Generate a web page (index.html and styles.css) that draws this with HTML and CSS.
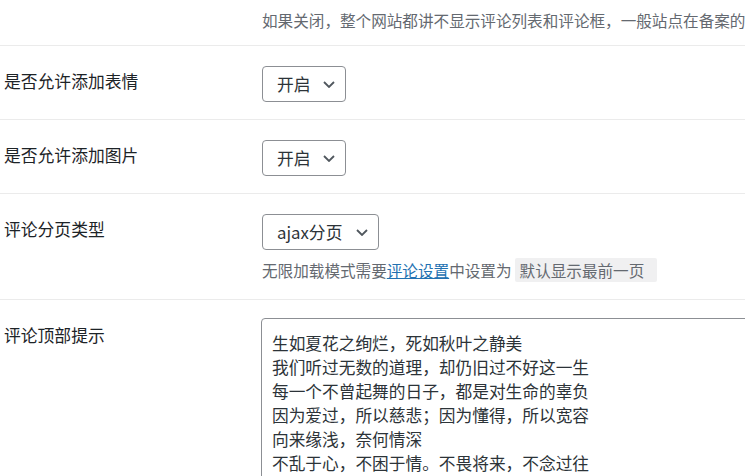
FILE: index.html
```html
<!DOCTYPE html>
<html lang="zh-CN">
<head>
<meta charset="utf-8">
<title>评论设置</title>
<link rel="stylesheet" href="styles.css">
</head>
<body>
<div class="page">
  <div class="row row-top">
    <div class="label"></div>
    <div class="field">
      <p class="desc nowrap">如果关闭，整个网站都讲不显示评论列表和评论框，一般站点在备案的</p>
    </div>
  </div>

  <div class="row">
    <div class="label">是否允许添加表情</div>
    <div class="field">
      <div class="select select-sm">
        <span class="select-text">开启</span>
        <svg class="chev" width="12" height="7" viewBox="0 0 12 7"><path d="M1 1l5 5 5-5" fill="none" stroke="#50575e" stroke-width="1.8"/></svg>
      </div>
    </div>
  </div>

  <div class="row">
    <div class="label">是否允许添加图片</div>
    <div class="field">
      <div class="select select-sm">
        <span class="select-text">开启</span>
        <svg class="chev" width="12" height="7" viewBox="0 0 12 7"><path d="M1 1l5 5 5-5" fill="none" stroke="#50575e" stroke-width="1.8"/></svg>
      </div>
    </div>
  </div>

  <div class="row">
    <div class="label">评论分页类型</div>
    <div class="field">
      <div class="select select-md">
        <span class="select-text">ajax分页</span>
        <svg class="chev" width="12" height="7" viewBox="0 0 12 7"><path d="M1 1l5 5 5-5" fill="none" stroke="#50575e" stroke-width="1.8"/></svg>
      </div>
      <p class="desc desc-below">无限加载模式需要<a href="#" class="link">评论设置</a>中设置为<code class="code">默认显示最前一页</code></p>
    </div>
  </div>

  <div class="row">
    <div class="label">评论顶部提示</div>
    <div class="field">
      <textarea class="textarea">生如夏花之绚烂，死如秋叶之静美
我们听过无数的道理，却仍旧过不好这一生
每一个不曾起舞的日子，都是对生命的辜负
因为爱过，所以慈悲；因为懂得，所以宽容
向来缘浅，奈何情深
不乱于心，不困于情。不畏将来，不念过往</textarea>
    </div>
  </div>
</div>
</body>
</html>
```

FILE: styles.css
```css
html, body {
  margin: 0;
  padding: 0;
  background: #ffffff;
  overflow: hidden;
}

body {
  font-family: "Noto Sans CJK SC", "Noto Sans", sans-serif;
  color: #1d2327;
}

.page {
  width: 745px;
  overflow: hidden;
}

.row {
  display: flex;
  padding: 20px 0 17px 4px;
  border-bottom: 1px solid #ebebeb;
}

.row-top {
  padding-top: 8px;
  padding-bottom: 13px;
}

.label {
  flex: none;
  width: 258px;
  font-size: 16.8px;
  line-height: 24px;
  padding-top: 3px;
  color: #1d2327;
}

.row-top .label {
  padding-top: 0;
}

.field {
  flex: 1;
  min-width: 0;
}

.desc {
  margin: 0;
  font-size: 15.6px;
  line-height: 24px;
  color: #646970;
}

.nowrap {
  white-space: nowrap;
}

.desc-below {
  margin-top: 8px;
  white-space: nowrap;
}

.link {
  color: #2271b1;
  text-decoration: underline;
}

.code {
  display: inline-block;
  vertical-align: top;
  margin-left: 3px;
  padding: 0 13px 0 5px;
  line-height: 24px;
  background: #f0f0f1;
  color: #646970;
  font-family: "Noto Sans CJK SC", sans-serif;
  font-size: 15.6px;
  border-radius: 2px;
}

.select {
  box-sizing: border-box;
  display: flex;
  align-items: center;
  height: 36px;
  padding: 0 10px 0 14px;
  border: 1px solid #8c8f94;
  border-radius: 4px;
  background: #fff;
  color: #2c3338;
}

.select-sm {
  width: 84px;
}

.select-md {
  width: 117px;
}

.select-text {
  font-size: 16.8px;
  line-height: 24px;
}

.chev {
  display: block;
  margin-left: auto;
  flex: none;
}

.textarea {
  display: block;
  box-sizing: border-box;
  width: 720px;
  height: 220px;
  margin: -2px 0 0 -1px;
  padding: 12px 10px;
  border: 1px solid #8c8f94;
  border-radius: 4px;
  font-family: "Noto Sans CJK SC", sans-serif;
  font-size: 16.7px;
  line-height: 24px;
  color: #2c3338;
  resize: none;
  overflow: hidden;
  background: #fff;
}
```
